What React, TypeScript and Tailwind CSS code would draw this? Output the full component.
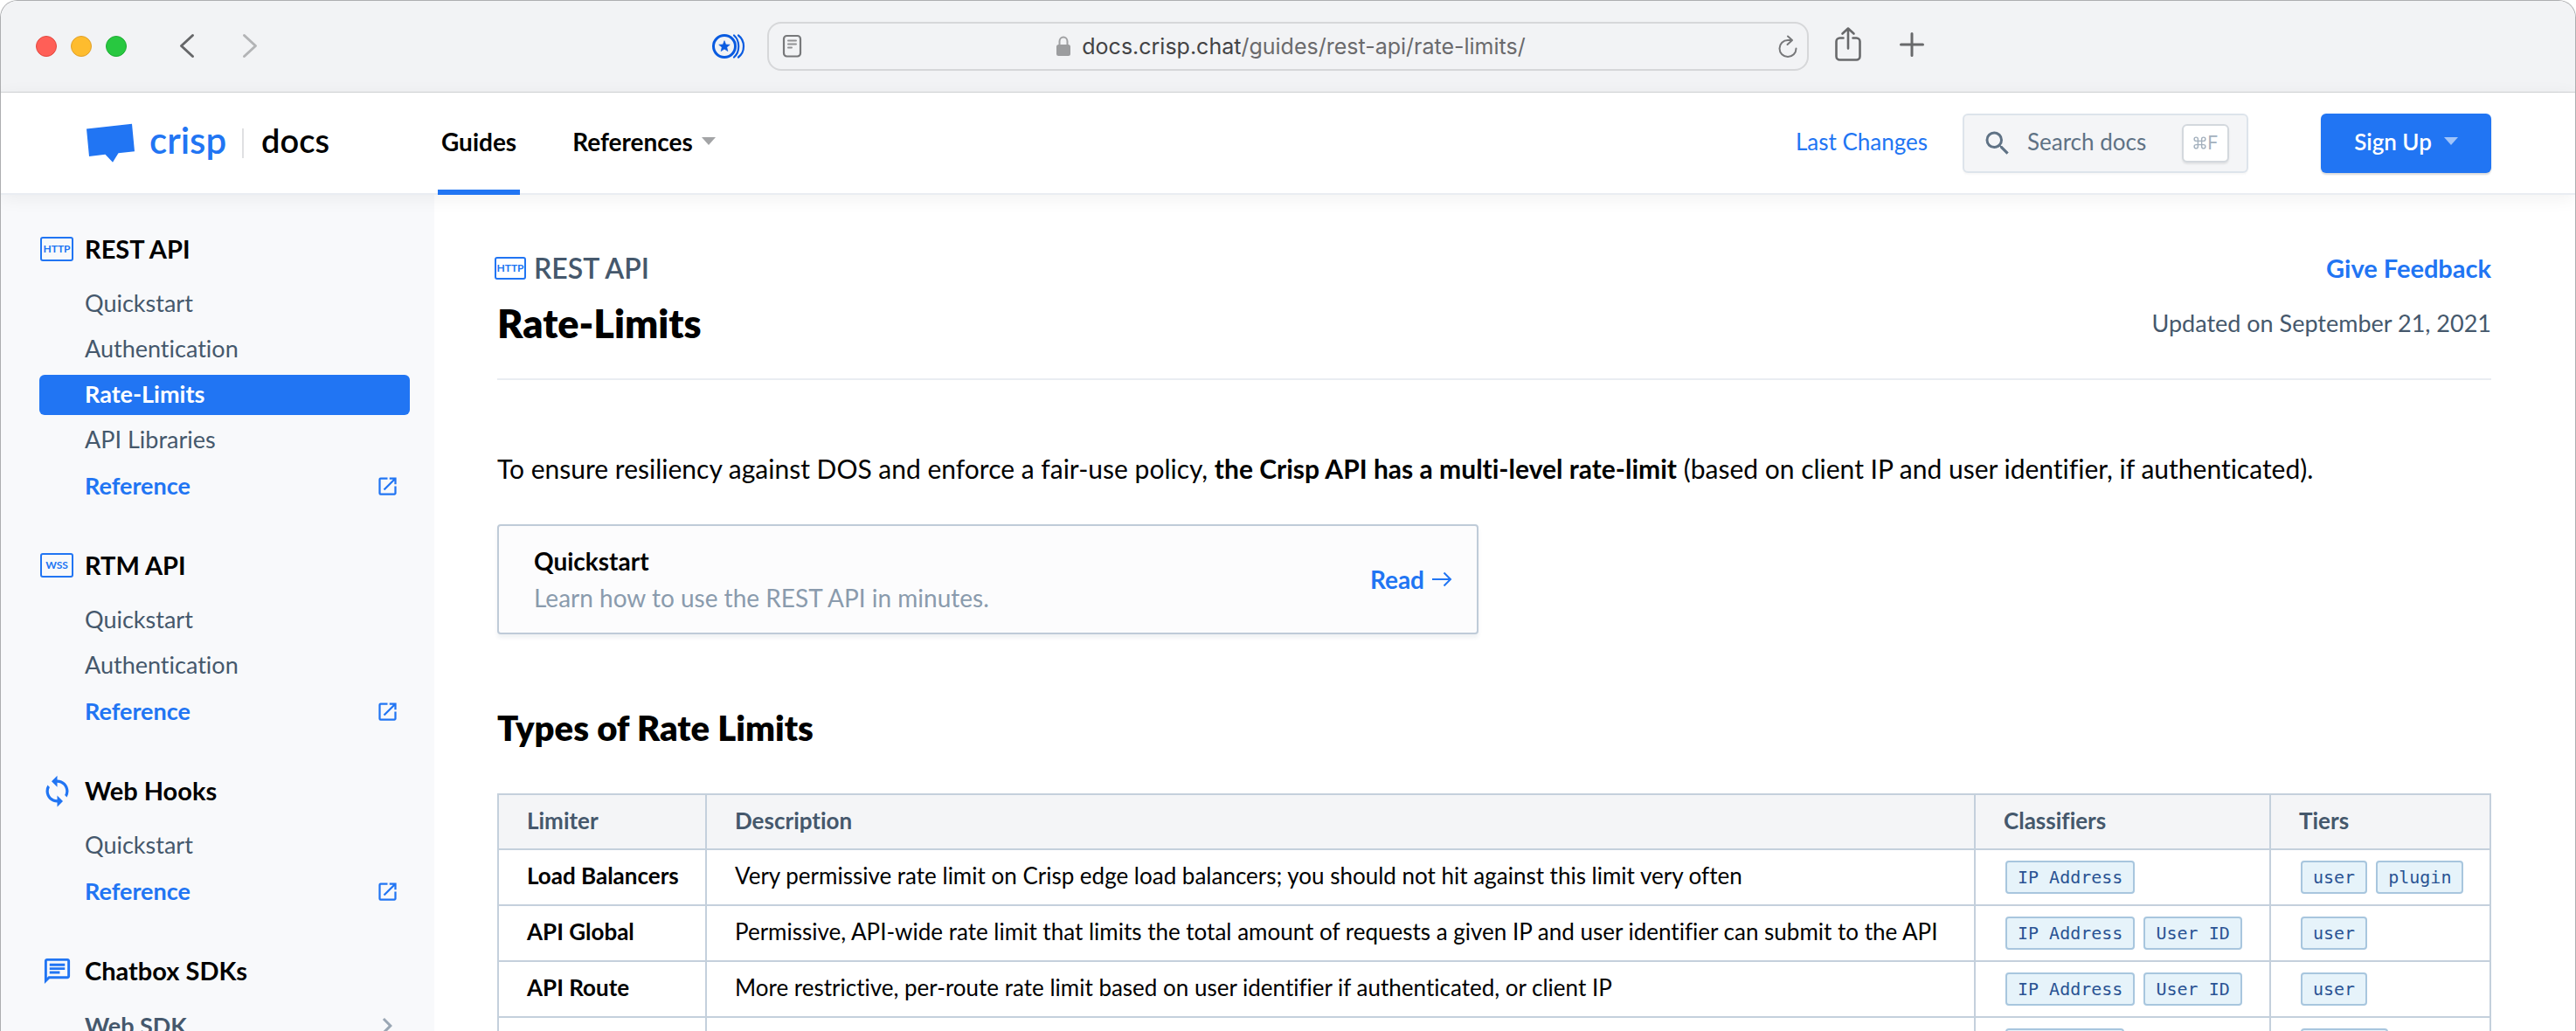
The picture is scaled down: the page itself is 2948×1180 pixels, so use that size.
import React from "react";
import { MdChevronRight, MdOpenInNew, MdOutlineChat, MdSearch, MdSync } from "react-icons/md";
import { Command } from "lucide-react";

type NavItem = { label: string; kind?: "active" | "reference" | "group" };
type NavSection = { title: string; icon: React.ReactNode; items: NavItem[] };

function ProtocolBadge({ children, small }: { children: string; small?: boolean }) {
  return (
    <span
      aria-hidden="true"
      className={
        small
          ? "flex h-[26px] w-9 items-center justify-center rounded-[3px] border-2 border-[#2175f3] text-[12px] leading-none font-bold text-[#2175f3]"
          : "flex h-7 w-[38px] items-center justify-center rounded-[3px] border-2 border-[#2175f3] text-[12px] leading-none font-bold text-[#2175f3]"
      }
    >
      {children}
    </span>
  );
}

const sections: NavSection[] = [
  {
    title: "REST API",
    icon: <ProtocolBadge>HTTP</ProtocolBadge>,
    items: [
      { label: "Quickstart" },
      { label: "Authentication" },
      { label: "Rate-Limits", kind: "active" },
      { label: "API Libraries" },
      { label: "Reference", kind: "reference" },
    ],
  },
  {
    title: "RTM API",
    icon: <ProtocolBadge>WSS</ProtocolBadge>,
    items: [{ label: "Quickstart" }, { label: "Authentication" }, { label: "Reference", kind: "reference" }],
  },
  {
    title: "Web Hooks",
    icon: <MdSync size={39} />,
    items: [{ label: "Quickstart" }, { label: "Reference", kind: "reference" }],
  },
  {
    title: "Chatbox SDKs",
    icon: <MdOutlineChat size={35} />,
    items: [{ label: "Web SDK", kind: "group" }],
  },
];

const limits = [
  {
    name: "Load Balancers",
    description:
      "Very permissive rate limit on Crisp edge load balancers; you should not hit against this limit very often",
    classifiers: ["IP Address"],
    tiers: ["user", "plugin"],
  },
  {
    name: "API Global",
    description:
      "Permissive, API-wide rate limit that limits the total amount of requests a given IP and user identifier can submit to the API",
    classifiers: ["IP Address", "User ID"],
    tiers: ["user"],
  },
  {
    name: "API Route",
    description: "More restrictive, per-route rate limit based on user identifier if authenticated, or client IP",
    classifiers: ["IP Address", "User ID"],
    tiers: ["user"],
  },
  { name: "", description: "", classifiers: ["Plugin ID"], tiers: ["plugin"] },
];

function Triangle({ className }: { className: string }) {
  return (
    <svg viewBox="0 0 16 9" width="16" height="9" className={className} aria-hidden="true">
      <path d="M0 0h16L8 9z" fill="currentColor" />
    </svg>
  );
}

function BrowserBar() {
  return (
    <div className="grid h-[105px] shrink-0 grid-cols-[1fr_minmax(0,1192px)_1fr] items-center border-b border-[#d2d4d6] bg-[#f2f3f5]">
      <div className="flex items-center pr-6 pl-10">
        <div className="flex gap-4">
          <button aria-label="Close" className="size-6 rounded-full border border-[#e2483f] bg-[#ff5f57]" />
          <button aria-label="Minimize" className="size-6 rounded-full border border-[#e0a02b] bg-[#febc2e]" />
          <button aria-label="Zoom" className="size-6 rounded-full border border-[#1fac34] bg-[#28c840]" />
        </div>
        <button aria-label="Back" className="ml-[59px]">
          <svg width="20" height="30" viewBox="0 0 20 30" fill="none" stroke="#666769" strokeWidth="3" strokeLinecap="round" strokeLinejoin="round">
            <path d="M16.500 2.500 3.500 14.500l13 12" />
          </svg>
        </button>
        <button aria-label="Forward" className="ml-[52px]">
          <svg width="20" height="30" viewBox="0 0 20 30" fill="none" stroke="#b3b4b6" strokeWidth="3" strokeLinecap="round" strokeLinejoin="round">
            <path d="m3.500 2.500 13 12-13 12" />
          </svg>
        </button>
        <button aria-label="Extension" className="ml-auto">
          <svg width="40" height="30" viewBox="0 0 40 30" fill="none" stroke="#0a5be0">
            <circle cx="15" cy="15" r="12.500" strokeWidth="3" />
            <path d="m15 8.600 1.700 4.300 4.600.3-3.500 2.900 1.100 4.500-3.900-2.500-3.900 2.500 1.100-4.500-3.500-2.900 4.600-.3z" fill="#0a5be0" strokeWidth=".6" />
            <path d="M26 2.500c7 6 7 19 0 25M31 2.500c8 6 8 19 0 25" strokeWidth="2.200" strokeLinecap="round" />
          </svg>
        </button>
      </div>
      <div className="flex h-14 items-center rounded-2xl border-2 border-[#d6d7d9] px-3.5">
        <button aria-label="Reader">
          <svg width="26" height="28" viewBox="0 0 26 28" fill="none" stroke="#77787a" strokeLinecap="round">
            <rect x="3" y="2" width="19" height="23.500" rx="3.500" strokeWidth="2.200" />
            <path d="M8 7.500h9M8 11.500h9M8 15.500h4" strokeWidth="2" stroke="#919294" />
          </svg>
        </button>
        <button className="flex flex-1 items-center justify-center font-['Inter',sans-serif] text-[25px] leading-8 text-[#6a6a6c]" aria-label="Address">
          <svg width="18" height="24" viewBox="0 0 18 24" className="mr-3" fill="none">
            <path d="M4.500 11V6.500a4.500 5 0 0 1 9 0V11" stroke="#a0a1a3" strokeWidth="2" />
            <rect x="1" y="10" width="16" height="13" rx="2.500" fill="#9c9d9f" />
          </svg>
          <span>
            <span className="text-[#434345]">docs.crisp.chat</span>/guides/rest-api/rate-limits/
          </span>
        </button>
        <button aria-label="Reload" className="-mr-1">
          <svg width="24" height="28" viewBox="0 0 24 28" fill="none" stroke="#77787a" strokeWidth="2" strokeLinecap="round" strokeLinejoin="round">
            <path d="M21.500 16.500a9.500 9.500 0 1 1-9.500-9.500h4.500M12 2.500l5 4.500-5.500 5" />
          </svg>
        </button>
      </div>
      <div className="flex items-center gap-11 pl-[30px]">
        <button aria-label="Share" className="pb-1">
          <svg width="30" height="42" viewBox="0 0 30 42" fill="none" stroke="#68696b" strokeWidth="2.600" strokeLinecap="round" strokeLinejoin="round">
            <path d="M9.500 13.500h-4a4 4 0 0 0-4 4v17a4 4 0 0 0 4 4h19a4 4 0 0 0 4-4v-17a4 4 0 0 0-4-4h-4M15 25.500V2.500M8.500 8.500l6.500-6 6.500 6" />
          </svg>
        </button>
        <button aria-label="New tab" className="pb-1">
          <svg width="28" height="28" viewBox="0 0 28 28" stroke="#68696b" strokeWidth="3" strokeLinecap="round">
            <path d="M14 1.500v25M1.500 14h25" />
          </svg>
        </button>
      </div>
    </div>
  );
}

function SiteHeader() {
  return (
    <header className="relative z-10 flex h-[117px] shrink-0 items-center border-b-2 border-[#e9edf2] bg-white pr-24 pl-[98px] shadow-[0_4px_20px_rgba(0,0,0,0.06)]">
      <a href="#home" className="flex w-[402px] shrink-0 items-center">
        <svg width="56" height="46" viewBox="0 0 56 46" aria-hidden="true">
          <path d="M0 6.500 52 .8l3 31.500-18.500 2-6.500 10.500-8.500-9L3 38z" fill="#2175f3" />
        </svg>
        <span className="ml-4 pb-2 text-[42px] leading-[50px] font-semibold text-[#2175f3]">crisp</span>
        <span className="ml-[18px] h-[34px] w-0.5 bg-[#dfe0e2]" />
        <span className="ml-5 pb-2 text-[38px] leading-[50px] font-semibold text-black">docs</span>
      </a>
      <nav className="flex h-full gap-14 text-[28px] leading-9 font-bold text-black">
        <a href="#guides" className="relative flex items-center px-1 pb-1">
          Guides
          <span className="absolute inset-x-0 -bottom-0.5 h-1.5 bg-[#2175f3]" />
        </a>
        <a href="#references" className="flex items-center gap-2.5 px-1 pb-1">
          References
          <Triangle className="text-[#a3a4a6]" />
        </a>
      </nav>
      <a href="#changes" className="ml-auto pb-1 text-[26px] leading-9 text-[#2175f3]">
        Last Changes
      </a>
      <div className="ml-10 flex h-[68px] w-[327px] items-center rounded-md border-2 border-[#dde4eb] bg-[#f4f5f7] px-5 shadow-[0_2px_2px_rgba(0,0,0,0.03)]">
        <MdSearch size={36} className="shrink-0 text-[#5f7285]" />
        <input
          type="search"
          aria-label="Search docs"
          placeholder="Search docs"
          className="ml-4 w-0 flex-1 bg-transparent pb-1 text-[26px] leading-9 outline-none placeholder:text-[#5f7285] placeholder:opacity-100"
        />
        <kbd className="flex h-11 w-[54px] items-center justify-center rounded-md border-2 border-[#d3d8dd] bg-white font-['Inter',sans-serif] text-[21px] leading-none text-[#a3b0bd] shadow-[0_2px_2px_rgba(0,0,0,0.08)]">
          <Command size={17} strokeWidth={2} />F
        </kbd>
      </div>
      <button className="ml-[83px] flex h-[68px] w-[195px] items-center justify-center gap-3.5 rounded-md bg-[#2175f3] pb-1 text-[26px] leading-9 font-semibold text-white shadow-[0_2px_2px_rgba(0,0,0,0.15)]">
        Sign Up
        <Triangle className="text-[#a0c4fa]" />
      </button>
    </header>
  );
}

function Sidebar() {
  return (
    <aside className="w-[496px] shrink-0 bg-[#f8f9fb] pt-[42px] pr-7 pl-11">
      {sections.map((section) => (
        <section key={section.title} className="mb-12">
          <h2 className="mb-5 flex h-10 items-center text-[29px] leading-10 font-bold text-black">
            <span className="mr-3 flex w-10 items-center justify-center text-[#2175f3]">{section.icon}</span>
            {section.title}
          </h2>
          <ul className="flex flex-col gap-1.5">
            {section.items.map((item) => (
              <li key={item.label}>
                {item.kind === "active" && (
                  <a href="#rate-limits" aria-current="page" className="flex h-[46px] items-center rounded-md bg-[#2175f3] pb-0.5 pl-[52px] text-[27px] font-bold text-white">
                    {item.label}
                  </a>
                )}
                {item.kind === "reference" && (
                  <a href="#reference" className="flex h-[46px] items-center justify-between pr-3 pl-[52px] text-[27px] font-bold text-[#2175f3]">
                    {item.label}
                    <MdOpenInNew size={27} />
                  </a>
                )}
                {item.kind === "group" && (
                  <a href="#group" className="flex h-[46px] items-center justify-between pr-2 pl-[52px] text-[27px] font-bold text-[#45586c]">
                    {item.label}
                    <MdChevronRight size={36} className="text-[#9aa7b4]" />
                  </a>
                )}
                {!item.kind && (
                  <a href="#page" className="flex h-[46px] items-center pb-0.5 pl-[52px] text-[27px] text-[#45586c]">
                    {item.label}
                  </a>
                )}
              </li>
            ))}
          </ul>
        </section>
      ))}
    </aside>
  );
}

function Tags({ values }: { values: string[] }) {
  return (
    <div className="flex gap-2.5 pl-0.5">
      {values.map((value) => (
        <code
          key={value}
          className="flex h-[38px] items-center rounded-[4px] border-2 border-[#a8c6de] bg-[#e6f3fa] px-3 font-['DejaVu_Sans_Mono',monospace] text-[20px] leading-none whitespace-nowrap text-[#2a5394]"
        >
          {value}
        </code>
      ))}
    </div>
  );
}

function LimitsTable() {
  const cell = "border-2 border-[#c4d0dc] px-8";
  return (
    <table className="mt-[51px] w-full table-fixed border-collapse text-left text-[26px] leading-9">
      <colgroup>
        <col className="w-[238px]" />
        <col />
        <col className="w-[338px]" />
        <col className="w-[252px]" />
      </colgroup>
      <thead>
        <tr className="h-[63px] bg-[#f4f5f7] text-[#45586c]">
          {["Limiter", "Description", "Classifiers", "Tiers"].map((title) => (
            <th key={title} scope="col" className="border-2 border-[#c4d0dc] px-8 pb-1 font-bold">
              {title}
            </th>
          ))}
        </tr>
      </thead>
      <tbody className="text-black">
        {limits.map((limit, index) => (
          <tr key={index} className="h-16">
            <th scope="row" className="border-2 border-[#c4d0dc] pr-0 pb-1 pl-8 font-bold whitespace-nowrap">
              {limit.name}
            </th>
            <td className="border-2 border-[#c4d0dc] px-8 pb-1 whitespace-nowrap">{limit.description}</td>
            <td className={cell}>
              <Tags values={limit.classifiers} />
            </td>
            <td className={cell}>
              <Tags values={limit.tiers} />
            </td>
          </tr>
        ))}
      </tbody>
    </table>
  );
}

function Article() {
  return (
    <main className="min-w-0 flex-1 pt-16 pr-24 pl-[72px]">
      <div className="border-b-2 border-[#e9edf2] pb-9">
        <div className="flex items-center justify-between">
          <p className="-ml-[3px] flex items-center gap-[9px] text-[32px] leading-10 font-semibold text-[#45586c]">
            <ProtocolBadge small>HTTP</ProtocolBadge>
            REST API
          </p>
          <a href="#feedback" className="text-[29px] leading-10 font-bold text-[#2175f3]">
            Give Feedback
          </a>
        </div>
        <div className="mt-4 flex items-center justify-between">
          <h1 className="text-[45px] leading-[54px] font-extrabold text-black">Rate-Limits</h1>
          <p className="text-[27px] leading-9 text-[#45586c]">Updated on September 21, 2021</p>
        </div>
      </div>
      <p className="mt-[79px] text-[30px] leading-[44px] text-black">
        To ensure resiliency against DOS and enforce a fair-use policy,{" "}
        <strong className="font-bold">the Crisp API has a multi-level rate-limit</strong> (based on client IP and
        user identifier, if authenticated).
      </p>
      <div className="mt-[42px] grid grid-cols-2 gap-9">
        <a
          href="#quickstart"
          className="flex items-center justify-between rounded-[4px] border-2 border-[#bfcbd8] bg-[#fcfcfd] py-[19px] pr-7 pl-10 shadow-[0_4px_4px_rgba(60,90,120,0.08)]"
        >
          <span className="flex flex-col text-[28px] leading-[42px]">
            <strong className="font-bold text-black">Quickstart</strong>
            <span className="text-[#8a9bad]">Learn how to use the REST API in minutes.</span>
          </span>
          <span className="flex items-center gap-2 text-[28px] font-bold text-[#2175f3]">
            Read
            <svg width="24" height="20" viewBox="0 0 24 20" fill="none" stroke="currentColor" strokeWidth="2" aria-hidden="true">
              <path d="M1 10h21M14.500 2.500 22 10l-7.500 7.500" />
            </svg>
          </span>
        </a>
      </div>
      <h2 className="mt-[83px] text-[40px] leading-[48px] font-extrabold text-black">Types of Rate Limits</h2>
      <LimitsTable />
    </main>
  );
}

export default function App() {
  return (
    <div className="flex h-screen flex-col overflow-hidden rounded-t-[20px] border border-b-0 border-[#adaeb0] bg-white font-['Lato',sans-serif] [font-variant-ligatures:none]">
      <BrowserBar />
      <SiteHeader />
      <div className="flex flex-1">
        <Sidebar />
        <Article />
      </div>
    </div>
  );
}
